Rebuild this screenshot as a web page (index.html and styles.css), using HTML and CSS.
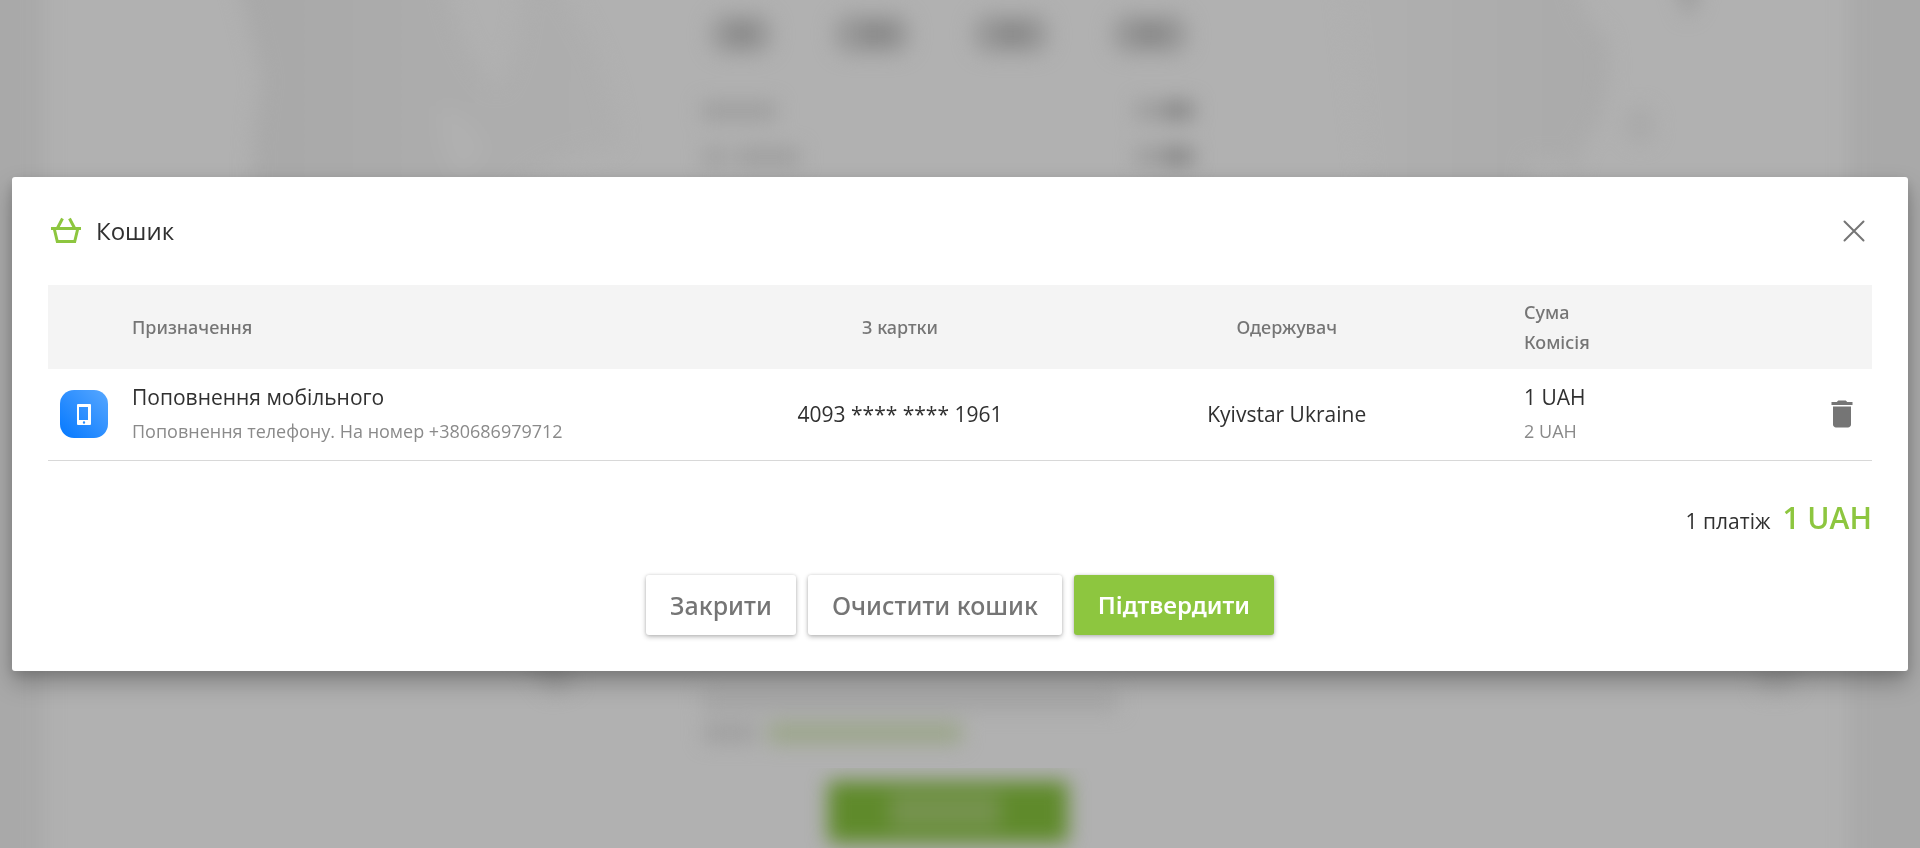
FILE: index.html
```html
<!DOCTYPE html>
<html lang="uk">
<head>
<meta charset="utf-8">
<meta name="viewport" content="width=device-width, initial-scale=1">
<title>Кошик</title>
<link rel="stylesheet" href="styles.css">
</head>
<body>
<svg class="backdrop" viewBox="0 0 1920 848" preserveAspectRatio="xMidYMin slice" aria-hidden="true">
  <defs>
    <filter id="soft" x="-10%" y="-20%" width="120%" height="150%" color-interpolation-filters="sRGB"><feGaussianBlur stdDeviation="10"/></filter>
    <linearGradient id="land" x1="0" x2="1" y1="0" y2="0">
      <stop offset="0" stop-color="#a8a8a8"/><stop offset=".5" stop-color="#acacac"/><stop offset="1" stop-color="#aeaeae"/>
    </linearGradient>
    <linearGradient id="land-right" x1="0" x2="1" y1="0" y2="0">
      <stop offset="0" stop-color="#b0b0b0"/><stop offset="1" stop-color="#aaaaaa"/>
    </linearGradient>
  </defs>
  <rect width="1920" height="848" fill="#b1b1b1"/>
  <g filter="url(#soft)">
    <rect x="-40" y="-40" width="84" height="940" fill="#a9a9a9"/>
    <rect x="1849" y="-40" width="120" height="940" fill="#a9a9a9"/>
    <path d="M232-40Q248 20 262 80Q248 150 256 240H490Q510 160 620 146Q612 50 540-40H525Q522 60 497 88Q450 40 445-40Z" fill="url(#land)"/>
    <path d="M1340-40L1372 240H1530Q1525 190 1530 160H1565Q1575 190 1600 240H1570Q1570 150 1595 130Q1616 80 1605 35Q1580 22 1570-40Z" fill="url(#land-right)"/>
    <path d="M440 105Q470 110 490 150L460 180Q435 150 440 105Z" fill="#b0b0b0"/>
    <path d="M1672-30h26v32l-12 16z" fill="#9c9c9c"/>
    <ellipse cx="1640" cy="125" rx="14" ry="18" fill="#a9a9a9"/>
    <path d="M510 640h50l15 45-25 8z" fill="#a3a3a3"/>
    <path d="M1755 650h50l-15 42h-30z" fill="#a6a6a6"/>
  </g>
  <g filter="url(#soft)" fill="#9a9a9a">
    <rect x="710" y="14" width="62" height="40" rx="16"/>
    <rect x="834" y="14" width="76" height="40" rx="16"/>
    <rect x="973" y="14" width="76" height="40" rx="16"/>
    <rect x="1112" y="14" width="76" height="40" rx="16"/>
    <g fill="#868686">
      <rect x="730" y="25" width="24" height="18"/>
      <rect x="860" y="25" width="34" height="18"/>
      <rect x="996" y="25" width="34" height="18"/>
      <rect x="1134" y="25" width="34" height="18"/>
    </g>
    <g fill="#9e9e9e">
      <rect x="702" y="102" width="74" height="18"/>
      <rect x="704" y="148" width="22" height="18"/>
      <rect x="736" y="148" width="64" height="18"/>
      <rect x="702" y="692" width="416" height="18" fill="#a3a3a3"/>
      <rect x="704" y="724" width="52" height="18"/>
    </g>
    <rect x="1136" y="101" width="18" height="19" fill="#999"/>
    <rect x="1160" y="101" width="34" height="19" fill="#888"/>
    <rect x="1136" y="147" width="18" height="19" fill="#999"/>
    <rect x="1160" y="147" width="34" height="19" fill="#888"/>
    <rect x="768" y="723" width="194" height="20" fill="#9aa588"/>
  </g>
  <g filter="url(#soft)">
    <rect x="828" y="781" width="240" height="62" rx="3" fill="#5f8a2b"/>
    <rect x="890" y="794" width="110" height="34" fill="#76934f"/>
  </g>
</svg>

<div class="overlay">
  <section class="dialog" role="dialog" aria-modal="true" aria-labelledby="cart-title">
    <header class="dialog-header">
      <svg class="basket" viewBox="0 0 36 36" aria-hidden="true">
        <g fill="none" stroke="#8dc63f" stroke-width="3">
          <path d="M3 15.500h30M6.300 16l3 12.500h17.400l3-12.500"/>
          <path d="M9.500 15l5-9.500M26.500 15l-5-9.500"/>
        </g>
      </svg>
      <h1 class="title" id="cart-title">Кошик</h1>
      <button class="icon-button close" type="button" aria-label="Закрити вікно">
        <svg viewBox="0 0 24 24" width="24" height="24" aria-hidden="true"><path d="M2.500 2.500l19 19M21.500 2.500l-19 19" stroke="#757575" stroke-width="2" stroke-linecap="round"/></svg>
      </button>
    </header>

    <table class="payments">
      <thead>
        <tr>
          <th class="col-icon"></th>
          <th class="col-name" scope="col">Призначення</th>
          <th class="col-card" scope="col">З картки</th>
          <th class="col-receiver" scope="col">Одержувач</th>
          <th class="col-sum" scope="col">Сума<br>Комісія</th>
          <th class="col-action"></th>
        </tr>
      </thead>
      <tbody>
        <tr>
          <td class="col-icon">
            <svg class="service" viewBox="0 0 48 48" aria-hidden="true">
              <defs><linearGradient id="blue" x1="0" y1="1" x2="1" y2="0"><stop offset="0" stop-color="#0478ff"/><stop offset="1" stop-color="#57a7ff"/></linearGradient></defs>
              <rect width="48" height="48" rx="14" fill="url(#blue)"/>
              <path fill="#fff" fill-rule="evenodd" d="M18 14h12a1 1 0 0 1 1 1v19a1 1 0 0 1-1 1H18a1 1 0 0 1-1-1V15a1 1 0 0 1 1-1zM19 17v13h9V17zM24 31.300a1.200 1.200 0 1 0 0 2.400a1.200 1.200 0 1 0 0-2.400z"/>
            </svg>
          </td>
          <td class="col-name">
            <div class="main">Поповнення мобільного</div>
            <div class="sub">Поповнення телефону. На номер +380686979712</div>
          </td>
          <td class="col-card">4093 **** **** 1961</td>
          <td class="col-receiver">Kyivstar Ukraine</td>
          <td class="col-sum">
            <div class="main">1 UAH</div>
            <div class="sub">2 UAH</div>
          </td>
          <td class="col-action">
            <button class="icon-button" type="button" aria-label="Видалити">
              <svg viewBox="0 0 24 24" width="36" height="36" aria-hidden="true"><path fill="#757575" d="M6 19c0 1.100.9 2 2 2h8c1.100 0 2-.9 2-2V7H6v12zM19 4h-3.500l-1-1h-5l-1 1H5v2h14V4z"/></svg>
            </button>
          </td>
        </tr>
      </tbody>
    </table>

    <p class="total"><span>1 платіж</span><strong>1 UAH</strong></p>

    <footer class="actions">
      <button class="button" type="button">Закрити</button>
      <button class="button" type="button">Очистити кошик</button>
      <button class="button primary" type="button">Підтвердити</button>
    </footer>
  </section>
</div>
</body>
</html>
```
FILE: styles.css
```css
* { box-sizing: border-box; }

body {
  margin: 0;
  background: #b1b1b1;
  color: #303030;
  font-family: "Open Sans", "Noto Sans", sans-serif;
  font-weight: 400;
  font-size: 21px;
  line-height: 30px;
}

.backdrop {
  position: fixed;
  inset: 0;
  width: 100%;
  height: 100%;
}

.overlay {
  position: relative;
  display: flex;
  align-items: center;
  min-height: 100vh;
  padding: 12px;
}

.dialog {
  flex: 1;
  min-width: 0;
  padding: 36px;
  border-radius: 3px;
  background: #fff;
  box-shadow: 0 12px 24px rgba(0, 0, 0, .25), 0 4px 12px rgba(0, 0, 0, .12);
}

.dialog-header {
  display: flex;
  align-items: center;
  gap: 12px;
  height: 36px;
  margin-bottom: 36px;
}

.basket { width: 36px; height: 36px; }

.title {
  flex: 1;
  margin: 0;
  font-size: 24px;
  font-weight: 400;
}

.icon-button {
  display: inline-flex;
  align-items: center;
  justify-content: center;
  width: 36px;
  height: 36px;
  padding: 0;
  border: 0;
  background: none;
  cursor: pointer;
}

.payments {
  width: 100%;
  table-layout: fixed;
  border-collapse: collapse;
}

.payments th {
  height: 84px;
  padding: 0;
  background: #f4f4f4;
  color: #757575;
  font-family: "Noto Sans", "Open Sans", sans-serif;
  font-size: 18px;
  font-weight: 500;
  text-align: left;
}

.payments td {
  height: 91px;
  padding: 0 0 1px;
  border-bottom: 1px solid #d8d8d8;
}

.payments .col-icon { width: 84px; padding-left: 12px; }
.payments .col-card,
.payments .col-receiver { width: 21.2%; text-align: center; }
.payments .col-sum { width: 18.2%; padding-left: 44px; }
.payments .col-action { width: 60px; text-align: center; }

.service { display: block; width: 48px; height: 48px; }

.icon-button svg,
.basket { display: block; }

.payments .icon-button { vertical-align: middle; }

.sub {
  margin-top: 4px;
  color: #8a8a8a;
  font-size: 18px;
}

.total {
  display: flex;
  align-items: baseline;
  justify-content: flex-end;
  gap: 12px;
  margin: 36px 0 33px;
  line-height: 42px;
}

.total strong {
  color: #8dc63f;
  font-size: 30px;
  font-weight: 600;
}

.actions {
  display: flex;
  flex-wrap: wrap;
  justify-content: center;
  gap: 12px;
}

.button {
  height: 60px;
  padding: 0 24px;
  border: 0;
  border-radius: 3px;
  background: #fff;
  box-shadow: 0 2px 5px rgba(0, 0, 0, .26), 0 0 3px rgba(0, 0, 0, .12);
  color: #757575;
  font-family: "Noto Sans", "Open Sans", sans-serif;
  font-size: 25px;
  font-weight: 500;
  line-height: 30px;
  cursor: pointer;
}

.button.primary {
  background: #8dc63f;
  color: #fff;
  font-size: 24px;
  font-weight: 600;
}
```
